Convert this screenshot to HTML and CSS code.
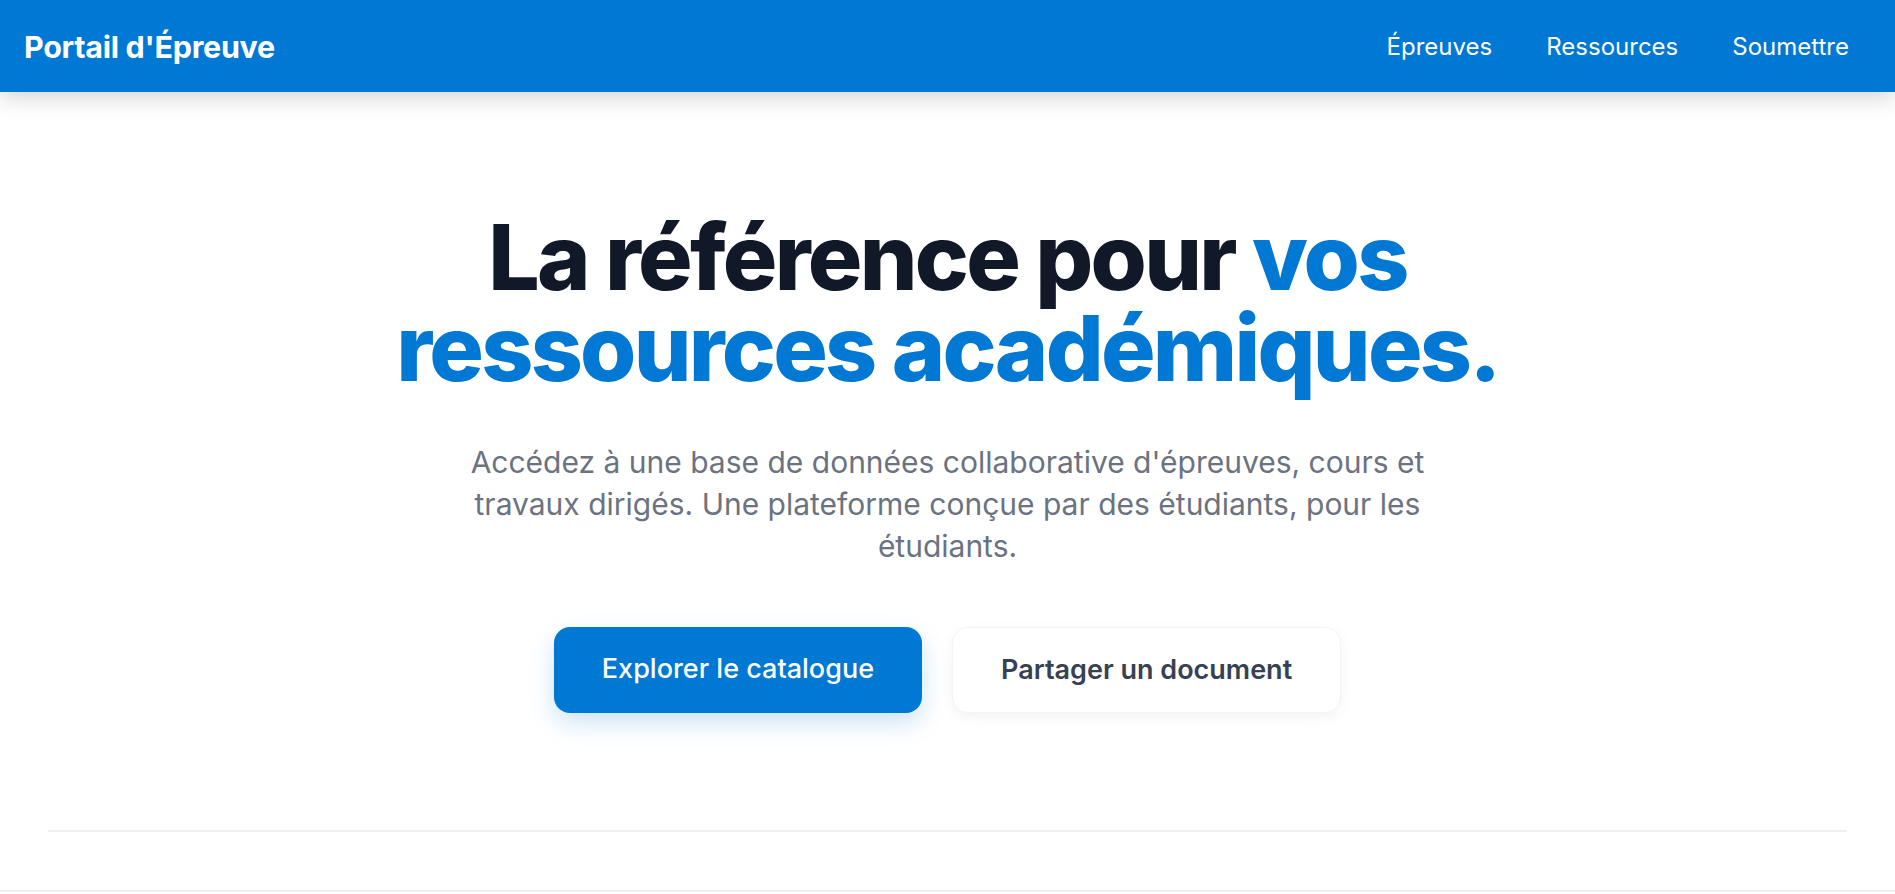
FILE: index.html
```html
<!DOCTYPE html>
<html lang="fr">
  <head>
    <meta charset="UTF-8" />
    <meta name="viewport" content="width=device-width, initial-scale=1.0" />
    <title>Portail d'Épreuve</title>
    <link rel="stylesheet" href="styles.css">
  </head>
  <body>
    <header>
      <nav class="navbar">
        <a href="index.html" class="brand">Portail d'Épreuve</a>
        <ul class="nav-links">
          <li><a href="epreuves.html">Épreuves</a></li>
          <li><a href="ressources.html">Ressources</a></li>
          <li><a href="soumettre.html">Soumettre</a></li>
        </ul>
      </nav>
    </header>

    <main>
      <section class="hero">
        <h1>La référence pour <span class="accent">vos ressources académiques.</span></h1>
        <p class="lead">
          Accédez à une base de données collaborative d'épreuves, cours et
          travaux dirigés. Une plateforme conçue par des étudiants, pour les
          étudiants.
        </p>
        <div class="hero-actions">
          <a href="catalogue.html" class="btn btn-primary">Explorer le catalogue</a>
          <a href="soumettre.html" class="btn btn-secondary">Partager un document</a>
        </div>
      </section>

      <hr class="divider" />

      <section class="next-section"></section>
    </main>
  </body>
</html>
```

FILE: styles.css
```css
/* Portail d'Épreuve - page d'accueil */

body {
  font-family: Inter, "Noto Sans", Arial, sans-serif;
  margin: 0;
  padding: 0;
  background-color: #fff;
  color: #111827;
}

a {
  text-decoration: none;
}

.navbar {
  display: flex;
  justify-content: space-between;
  align-items: center;
  height: 92px;
  padding: 0 24px;
  background-color: #0078d4;
  box-shadow: 0 5px 22px rgba(0, 0, 0, 0.18);
  position: relative;
  z-index: 10;
}

.brand {
  color: #fff;
  font-size: 30.5px;
  font-weight: 700;
  letter-spacing: -0.01em;
}

.nav-links {
  list-style: none;
  display: flex;
  gap: 10px;
  margin: 0;
  padding: 0;
}

.nav-links a {
  display: block;
  color: #fff;
  font-size: 24px;
  padding: 10px 22px;
}

.hero {
  display: flex;
  flex-direction: column;
  align-items: center;
  text-align: center;
  padding: 120px 24px 117px;
}

.hero h1 {
  margin: 0;
  font-size: 91px;
  font-weight: 800;
  line-height: 1;
  letter-spacing: -0.03em;
  max-width: 1140px;
  color: #111827;
}

.accent {
  color: #0078d4;
}

.lead {
  margin: 47px 0 0;
  max-width: 1000px;
  font-size: 30px;
  line-height: 42px;
  color: #6b7280;
}

.hero-actions {
  display: flex;
  gap: 30px;
  margin-top: 60px;
}

.btn {
  display: block;
  padding: 26px 48px;
  font-size: 27px;
  line-height: 32px;
  border-radius: 16px;
}

.btn-primary {
  background-color: #0078d4;
  color: #fff;
  font-weight: 500;
  box-shadow: 0 10px 24px rgba(0, 120, 212, 0.2);
}

.btn-secondary {
  background-color: #fff;
  color: #374151;
  font-weight: 600;
  border: 1px solid #f3f4f6;
  box-shadow: 0 4px 14px rgba(0, 0, 0, 0.05);
}

.divider {
  margin: 0 48px;
  border: none;
  border-top: 2px solid #f0f0f0;
}

.next-section {
  height: 58px;
  border-bottom: 2px solid #eee;
}
```
